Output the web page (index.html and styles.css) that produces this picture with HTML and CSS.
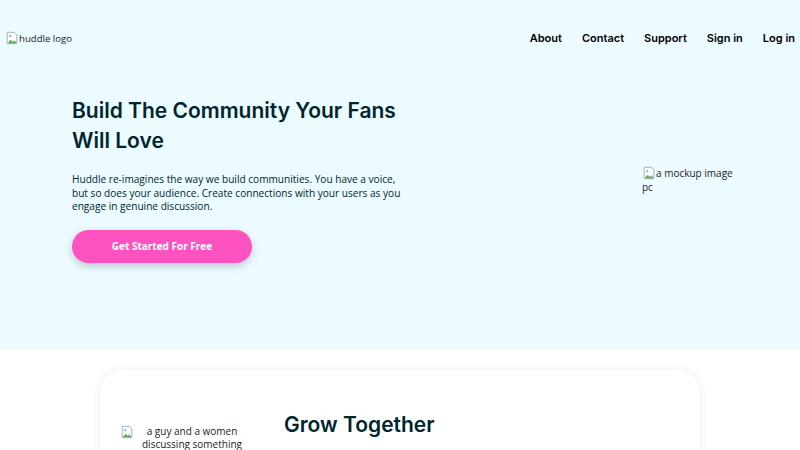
FILE: index.html
```html
<!DOCTYPE html>
<html lang="en">
<head>
<meta charset="utf-8">
<title>Huddle</title>
<link rel="stylesheet" href="styles.css">
</head>
<body>
<header class="hero">
  <nav class="topbar">
    <span class="alt-img logo"><svg class="broken" viewBox="0 0 16 16" width="16" height="16"><path d="M2.5 1.5h8l3 3v10h-11z" fill="#fff" stroke="#9aa5ad"/><path d="M3 14l3.5-4 2.5 2.5 2-2 2 3.5z" fill="#5aa85a"/><circle cx="6" cy="6" r="1.3" fill="#7fb6e0"/></svg>huddle logo</span>
    <ul class="links">
      <li>About</li>
      <li>Contact</li>
      <li>Support</li>
      <li>Sign in</li>
      <li>Log in</li>
    </ul>
  </nav>
  <div class="hero-body">
    <div class="hero-text">
      <h1>Build The Community Your Fans Will Love</h1>
      <p>Huddle re-imagines the way we build communities. You have a voice, but so does your audience. Create connections with your users as you engage in genuine discussion.</p>
      <a class="cta">Get Started For Free</a>
    </div>
    <div class="alt-img mockup"><svg class="broken" viewBox="0 0 16 16" width="16" height="16"><path d="M2.5 1.5h8l3 3v10h-11z" fill="#fff" stroke="#9aa5ad"/><path d="M3 14l3.5-4 2.5 2.5 2-2 2 3.5z" fill="#5aa85a"/><circle cx="6" cy="6" r="1.3" fill="#7fb6e0"/></svg>a mockup image pc</div>
  </div>
</header>
<main class="features">
  <section class="card">
    <div class="alt-img duo"><svg class="broken" viewBox="0 0 16 16" width="16" height="16"><path d="M2.5 1.5h8l3 3v10h-11z" fill="#fff" stroke="#9aa5ad"/><path d="M3 14l3.5-4 2.5 2.5 2-2 2 3.5z" fill="#5aa85a"/><circle cx="6" cy="6" r="1.3" fill="#7fb6e0"/></svg><span>a guy and a women discussing something</span></div>
    <div class="card-text">
      <h2>Grow Together</h2>
    </div>
  </section>
</main>
</body>
</html>
```
FILE: styles.css
```css
* { box-sizing: border-box; }
body {
  margin: 0;
  font-family: "Open Sans", "Liberation Sans", sans-serif;
  color: #00252e;
  background: #fff;
  overflow: hidden;
  height: 450px;
}
.hero {
  background: #ebfbff;
  height: 350px;
}
.topbar {
  display: flex;
  justify-content: space-between;
  align-items: center;
  padding: 24px 5px 0 5px;
  height: 52px;
}
.alt-img {
  font-size: 10px;
  color: #222;
  line-height: 14px;
}
.logo {
  font-size: 9.6px;
}
.broken {
  width: 14px;
  height: 14px;
  vertical-align: -3px;
}
.links {
  display: flex;
  gap: 20px;
  list-style: none;
  margin: 0;
  padding: 0;
  font-family: "Inter", sans-serif;
  font-weight: 600;
  font-size: 11px;
  color: #000;
}
.hero-body {
  display: flex;
  padding: 44px 0 0 72px;
}
.hero-text {
  width: 340px;
}
h1 {
  font-family: "Inter", sans-serif;
  font-weight: 600;
  font-size: 21px;
  line-height: 30px;
  margin: 0 0 17px;
  color: #00252e;
}
.hero-text p {
  width: 332px;
  font-size: 10.1px;
  line-height: 13.5px;
  margin: 0 0 16px;
  color: #00252e;
}
.cta {
  display: inline-flex;
  align-items: center;
  justify-content: center;
  width: 180px;
  height: 33px;
  border-radius: 17px;
  background: #ff52c1;
  color: #fff;
  font-weight: 700;
  font-size: 10px;
  box-shadow: 0 3px 8px rgba(0, 0, 0, 0.2);
}
.mockup {
  margin: 70px 0 0 230px;
  width: 92px;
}
.features {
  padding: 20px 100px 0;
}
.card {
  display: flex;
  background: #fff;
  border-radius: 22px;
  box-shadow: 0 0 10px rgba(0, 0, 0, 0.08);
  padding: 40px 20px 0;
  height: 200px;
}
.duo {
  width: 130px;
  display: flex;
  align-items: flex-start;
  margin-top: 15px;
  line-height: 13px;
}
.duo span {
  text-align: center;
  flex: 1;
}
.card-text {
  margin-left: 34px;
}
h2 {
  font-family: "Inter", sans-serif;
  font-weight: 600;
  font-size: 21px;
  margin: 0;
  line-height: 30px;
}
```
